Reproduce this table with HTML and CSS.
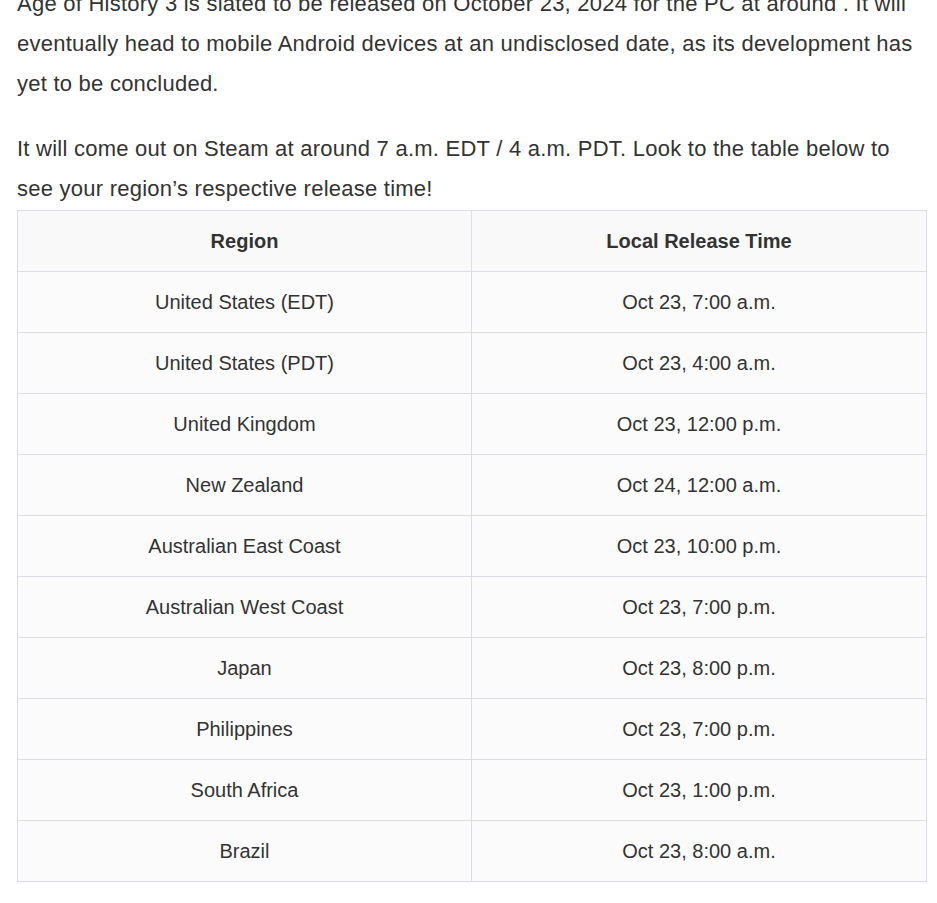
FILE: index.html
```html
<!DOCTYPE html>
<html lang="en">
<head>
<meta charset="utf-8">
<title>Age of History 3 release time</title>
<link rel="stylesheet" href="styles.css">
</head>
<body>
<main class="article">
  <p class="para">Age of History 3 is slated to be released on October 23, 2024 for the PC at around . It will eventually head to mobile Android devices at an undisclosed date, as its development has yet to be concluded.</p>
  <p class="para para-last">It will come out on Steam at around 7 a.m. EDT / 4 a.m. PDT. Look to the table below to see your region’s respective release time!</p>
  <table class="times">
    <colgroup><col class="col-region"><col class="col-time"></colgroup>
    <thead>
      <tr><th>Region</th><th>Local Release Time</th></tr>
    </thead>
    <tbody>
      <tr><td>United States (EDT)</td><td>Oct 23, 7:00 a.m.</td></tr>
      <tr><td>United States (PDT)</td><td>Oct 23, 4:00 a.m.</td></tr>
      <tr><td>United Kingdom</td><td>Oct 23, 12:00 p.m.</td></tr>
      <tr><td>New Zealand</td><td>Oct 24, 12:00 a.m.</td></tr>
      <tr><td>Australian East Coast</td><td>Oct 23, 10:00 p.m.</td></tr>
      <tr><td>Australian West Coast</td><td>Oct 23, 7:00 p.m.</td></tr>
      <tr><td>Japan</td><td>Oct 23, 8:00 p.m.</td></tr>
      <tr><td>Philippines</td><td>Oct 23, 7:00 p.m.</td></tr>
      <tr><td>South Africa</td><td>Oct 23, 1:00 p.m.</td></tr>
      <tr><td>Brazil</td><td>Oct 23, 8:00 a.m.</td></tr>
    </tbody>
  </table>
</main>
</body>
</html>
```
FILE: styles.css
```css
html, body {
  margin: 0;
  padding: 0;
  background: #ffffff;
}
body {
  font-family: "Liberation Sans", Arial, sans-serif;
  color: #333333;
}
.article {
  width: 910px;
  margin: -16px 0 0 17px;
}
.para {
  font-size: 22px;
  letter-spacing: 0.24px;
  line-height: 40px;
  margin: 0 0 25px 0;
}
.para-last {
  margin-bottom: 0;
}
.times {
  width: 910px;
  border-collapse: collapse;
  table-layout: fixed;
  margin: 1px 0 0 0;
}
.col-region {
  width: 454px;
}
.times th,
.times td {
  border: 1px solid #dcdde8;
  height: 61px;
  padding: 0 10px;
  text-align: center;
  font-size: 20px;
  color: #333333;
  box-sizing: border-box;
}
.times th {
  background: #f9f9fa;
  font-weight: bold;
}
.times td {
  background: #fbfbfc;
}
```
